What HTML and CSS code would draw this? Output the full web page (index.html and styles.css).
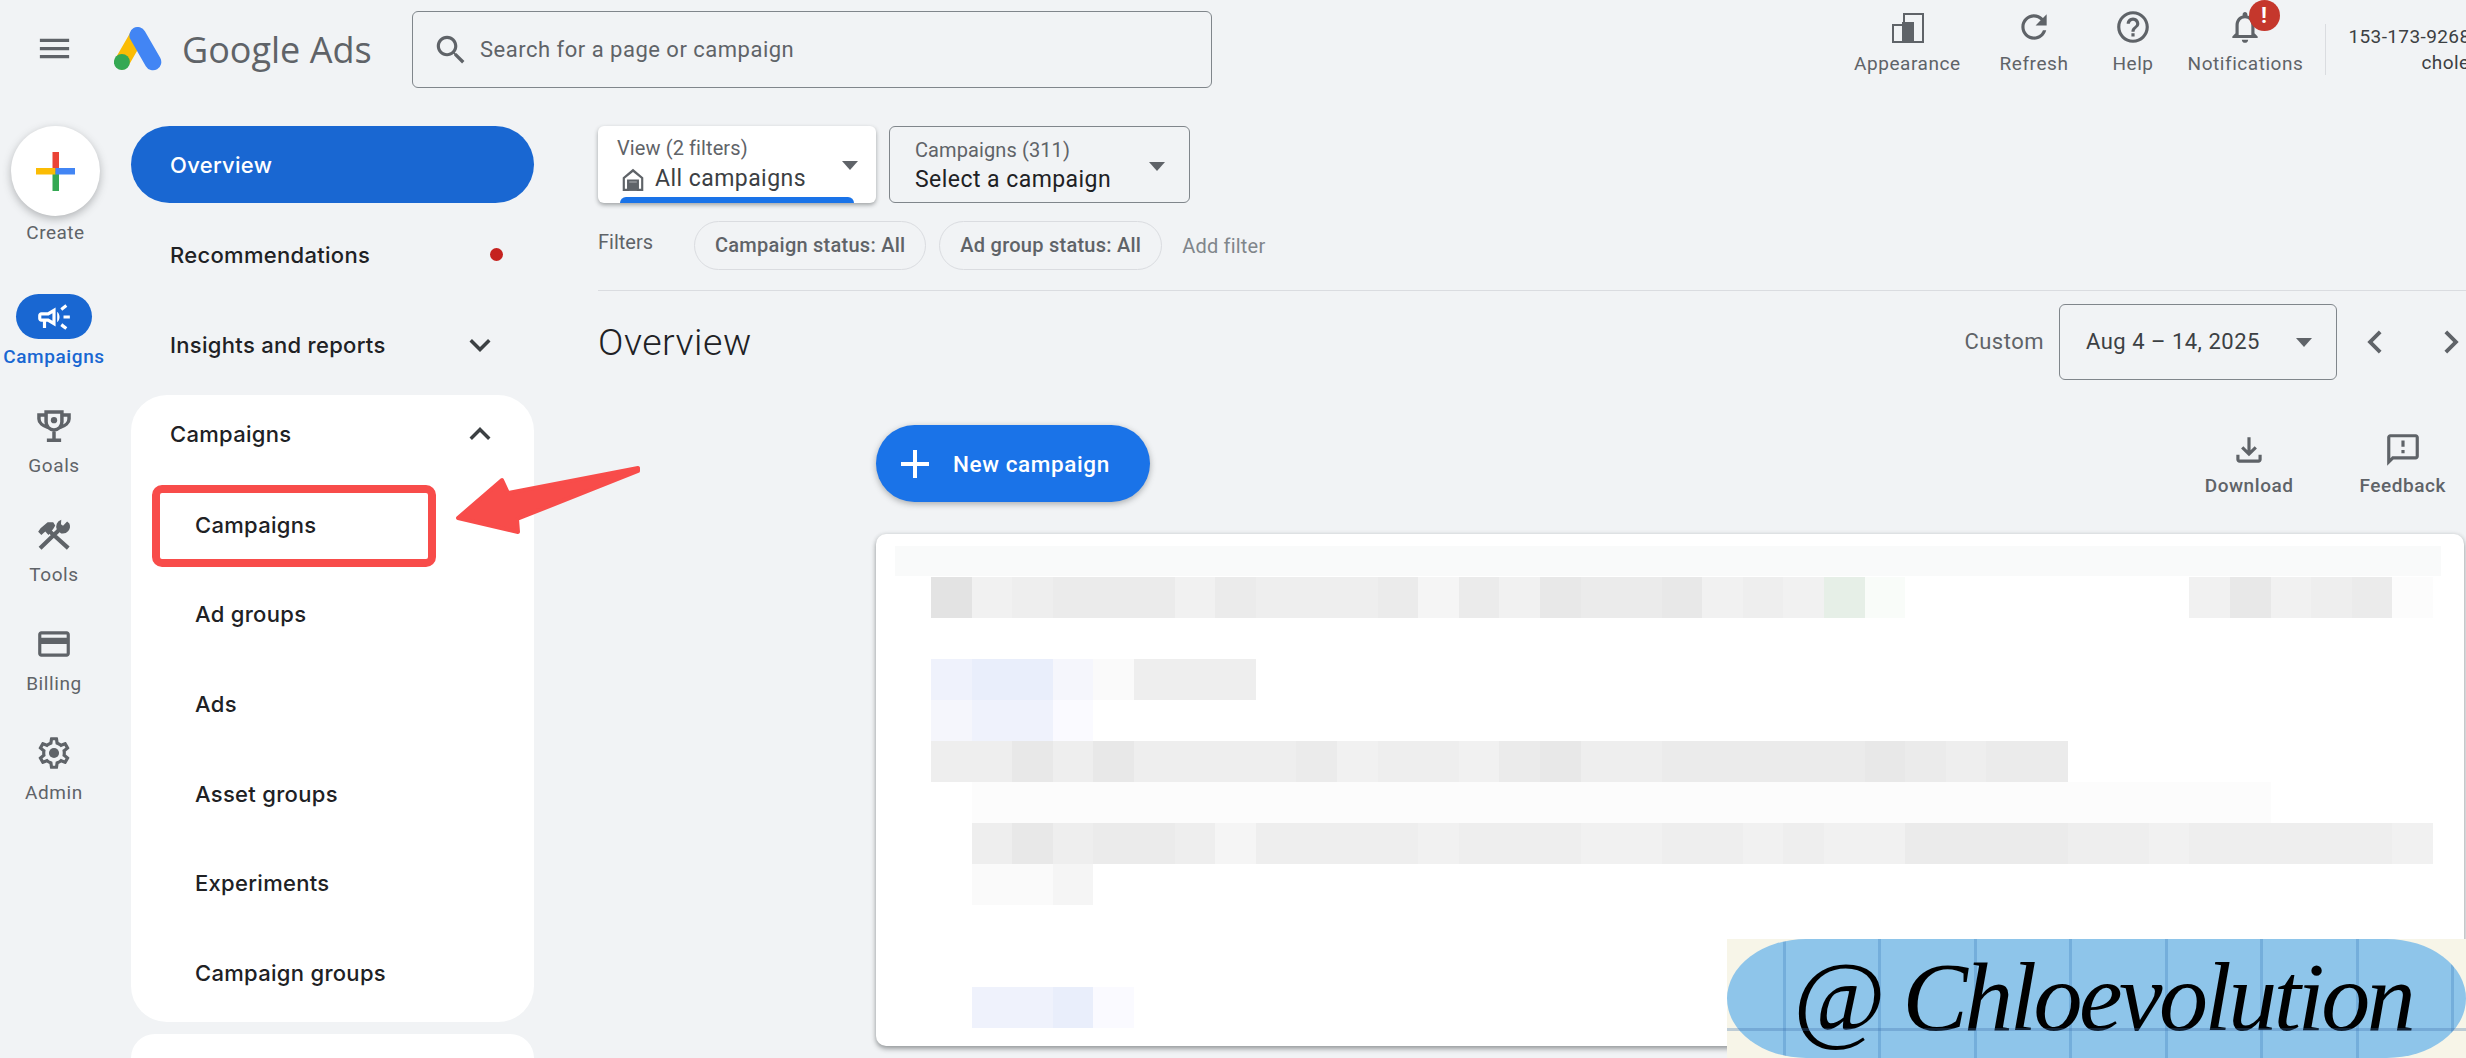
FILE: index.html
```html
<!DOCTYPE html>
<html lang="en">
<head>
  <meta charset="UTF-8">
  <title>Google Ads - Overview</title>
  <link rel="stylesheet" href="styles.css">
</head>
<body>

  <header class="topbar">
    <svg class="menu-icon" viewBox="0 0 24 24"><path d="M3 18h18v-2H3v2zm0-5h18v-2H3v2zm0-7v2h18V6H3z"/></svg>
    <svg class="logo" viewBox="0 0 48 44">
      <path d="M23 9 8 35" stroke="#fbbc04" stroke-width="15" stroke-linecap="round" fill="none"/>
      <path d="M23.7 8.3 39 35" stroke="#4285f4" stroke-width="16.6" stroke-linecap="round" fill="none"/>
      <circle cx="7.9" cy="35" r="8" fill="#34a853"/>
    </svg>
    <div class="brand">Google Ads</div>
    <div class="search">
      <svg class="icon" viewBox="0 0 24 24"><path d="M15.5 14h-.79l-.28-.27C15.41 12.59 16 11.11 16 9.5 16 5.91 13.09 3 9.5 3S3 5.91 3 9.5 5.91 16 9.5 16c1.61 0 3.09-.59 4.23-1.57l.27.28v.79l5 4.99L20.49 19l-4.99-5zm-6 0C7.01 14 5 11.99 5 9.5S7.01 5 9.5 5 14 7.01 14 9.5 11.99 14 9.5 14z"/></svg>
      <span>Search for a page or campaign</span>
    </div>
    <div class="tools">
      <div class="tool tool-appearance">
        <svg class="icon" viewBox="0 0 38 38"><path d="M15 5h21v30H4V16h11zM17 7v7h0v0h0v19h17V7zM6 18v15h8V18z" fill-rule="evenodd"/><rect x="14" y="14" width="12" height="20"/></svg>
        <span>Appearance</span>
      </div>
      <div class="tool tool-refresh">
        <svg class="icon" viewBox="0 0 24 24"><path d="M17.65 6.35C16.2 4.9 14.21 4 12 4c-4.42 0-7.99 3.58-7.99 8s3.57 8 7.99 8c3.73 0 6.84-2.55 7.73-6h-2.08c-.82 2.33-3.04 4-5.65 4-3.31 0-6-2.69-6-6s2.69-6 6-6c1.66 0 3.14.69 4.22 1.78L13 11h7V4l-2.35 2.35z"/></svg>
        <span>Refresh</span>
      </div>
      <div class="tool tool-help">
        <svg class="icon" viewBox="0 0 24 24"><path d="M11 18h2v-2h-2v2zm1-16C6.48 2 2 6.48 2 12s4.48 10 10 10 10-4.48 10-10S17.52 2 12 2zm0 18c-4.41 0-8-3.59-8-8s3.59-8 8-8 8 3.59 8 8-3.59 8-8 8zm0-14c-2.21 0-4 1.79-4 4h2c0-1.1.9-2 2-2s2 .9 2 2c0 2-3 1.75-3 5h2c0-2.25 3-2.5 3-5 0-2.21-1.79-4-4-4z"/></svg>
        <span>Help</span>
      </div>
      <div class="tool tool-notify">
        <svg class="icon" viewBox="0 0 24 24"><path d="M12 22c1.1 0 2-.9 2-2h-4c0 1.1.9 2 2 2zm6-6v-5c0-3.07-1.63-5.64-4.5-6.32V4c0-.83-.67-1.5-1.5-1.5s-1.5.67-1.5 1.5v.68C7.64 5.36 6 7.92 6 11v5l-2 2v1h16v-1l-2-2zm-2 1H8v-6c0-2.48 1.51-4.5 4-4.5s4 2.02 4 4.5v6z"/></svg>
        <span>Notifications</span>
        <b class="badge">!</b>
      </div>
    </div>
    <div class="account">
      <div>153-173-9268</div>
      <div>chole</div>
    </div>
  </header>

  <div class="layout">

    <aside class="rail">
      <div class="create">
        <div class="create-btn">
          <svg viewBox="0 0 39 39">
            <rect x="16.5" y="0" width="6.5" height="20" fill="#ea4335"/>
            <rect x="16.5" y="19" width="6.5" height="20" fill="#34a853"/>
            <rect x="0" y="16" width="19.5" height="6.5" fill="#fbbc04"/>
            <rect x="19.5" y="16" width="19.5" height="6.5" fill="#4285f4"/>
          </svg>
        </div>
        <span>Create</span>
      </div>
      <div class="rail-item rail-active">
        <div class="rail-icon">
          <svg class="icon" viewBox="0 0 24 24"><path fill-rule="evenodd" d="M18 11v2h4v-2zM16 17.61c.96.71 2.21 1.65 3.2 2.39l1.2-1.6c-.99-.74-2.24-1.68-3.2-2.4zM20.4 5.6 19.2 4c-.99.74-2.24 1.68-3.2 2.4L17.2 8c.96-.72 2.21-1.65 3.2-2.4zM4 9c-1.1 0-2 .9-2 2v2c0 1.1.9 2 2 2h1v4h2v-4h1l5 3V6L8 9zM4 11h4.6L11 9.6v4.8L8.6 13H4zM15.5 12c0-1.33-.58-2.53-1.5-3.35v6.69c.92-.81 1.5-2.01 1.5-3.34z"/></svg>
        </div>
        <span>Campaigns</span>
      </div>
      <div class="rail-item">
        <div class="rail-icon">
          <svg class="icon" viewBox="0 0 24 24"><path d="M7 3.2h10v6.3a5 5 0 0 1-10 0zM7 5H2.5v2.5C2.5 10 5 12 8 12.8M17 5h4.500v2.500C21.500 10 19 12 16 12.800M12 14.500v6M7.500 21h9" fill="none" stroke="#5f6368" stroke-width="2.200"/><circle cx="12" cy="8.300" r="2"/></svg>
        </div>
        <span>Goals</span>
      </div>
      <div class="rail-item">
        <div class="rail-icon">
          <svg class="icon" viewBox="0 0 24 24"><path d="M2 10l1.500-2.300L8 4h3.500l1.300 2-1 1.700L10.300 9.800 8.500 12 6.500 9.800 4 12z"/><path d="M9 9.500 21 20.300M3.200 20.300 15.500 8.500" fill="none" stroke="#5f6368" stroke-width="2.600"/><path d="M20.600 3.700 18 6.300l-1.300-.9.2-2.900a4.600 4.600 0 0 0-2.700 6.500l2.600 2.200a4.600 4.600 0 0 0 5.200-6.300z" transform="translate(-.3 -.2)"/></svg>
        </div>
        <span>Tools</span>
      </div>
      <div class="rail-item">
        <div class="rail-icon">
          <svg class="icon" viewBox="0 0 24 24"><path d="M20 4H4c-1.110 0-1.990.89-1.990 2L2 18c0 1.110.89 2 2 2h16c1.110 0 2-.89 2-2V6c0-1.110-.89-2-2-2zm0 14H4v-6h16v6zm0-10H4V6h16v2z"/></svg>
        </div>
        <span>Billing</span>
      </div>
      <div class="rail-item">
        <div class="rail-icon">
          <svg class="icon" viewBox="0 0 24 24"><path d="M19.430 12.980c.04-.32.07-.64.07-.98 0-.34-.03-.66-.07-.98l2.110-1.650c.19-.15.24-.42.12-.64l-2-3.460c-.09-.16-.26-.25-.44-.25-.06 0-.12.01-.17.03l-2.490 1c-.52-.4-1.080-.73-1.690-.98l-.38-2.650C14.460 2.180 14.250 2 14 2h-4c-.25 0-.46.18-.49.42l-.38 2.650c-.61.25-1.170.59-1.690.98l-2.490-1c-.06-.02-.12-.03-.18-.03-.17 0-.34.09-.43.25l-2 3.460c-.13.22-.07.49.12.64l2.110 1.650c-.04.32-.07.65-.07.98 0 .33.03.66.07.98l-2.110 1.650c-.19.15-.24.42-.12.64l2 3.460c.09.16.26.25.44.25.06 0 .12-.01.17-.03l2.490-1c.52.4 1.080.73 1.690.98l.38 2.650c.03.24.24.42.49.42h4c.25 0 .46-.18.49-.42l.38-2.650c.61-.25 1.170-.59 1.690-.98l2.490 1c.06.02.12.03.18.03.17 0 .34-.09.43-.25l2-3.460c.12-.22.07-.49-.12-.64l-2.110-1.650zm-1.980-1.710c.04.31.05.52.05.73 0 .21-.02.43-.05.73l-.14 1.130.89.7 1.080.84-.7 1.210-1.270-.51-1.040-.42-.9.68c-.43.32-.84.56-1.250.73l-1.060.43-.16 1.130-.2 1.350h-1.400l-.19-1.350-.16-1.130-1.060-.43c-.43-.18-.83-.41-1.230-.71l-.91-.7-1.060.43-1.270.51-.7-1.210 1.080-.84.89-.7-.14-1.130c-.03-.31-.05-.54-.05-.74s.02-.43.05-.73l.14-1.130-.89-.7-1.080-.84.7-1.210 1.270.51 1.040.42.9-.68c.43-.32.84-.56 1.250-.73l1.060-.43.16-1.130.2-1.350h1.390l.19 1.350.16 1.130 1.060.43c.43.18.83.41 1.230.71l.91.7 1.060-.43 1.270-.51.7 1.210-1.070.85-.89.7.14 1.130z"/><circle cx="12" cy="12" r="3.200"/></svg>
        </div>
        <span>Admin</span>
      </div>
    </aside>

    <nav class="nav">
      <div class="nav-row nav-active">Overview</div>
      <div class="nav-row">Recommendations<i class="dot"></i></div>
      <div class="nav-row">Insights and reports
        <svg class="chevron" viewBox="0 0 24 24"><path d="M16.590 8.590 12 13.170 7.410 8.590 6 10l6 6 6-6z"/></svg>
      </div>
      <div class="nav-card">
        <div class="nav-head">Campaigns
          <svg class="chevron" viewBox="0 0 24 24"><path d="M7.410 15.410 12 10.830l4.590 4.580L18 14l-6-6-6 6z"/></svg>
        </div>
        <div class="nav-sub">Campaigns</div>
        <div class="nav-sub">Ad groups</div>
        <div class="nav-sub">Ads</div>
        <div class="nav-sub">Asset groups</div>
        <div class="nav-sub">Experiments</div>
        <div class="nav-sub">Campaign groups</div>
      </div>
      <div class="nav-card nav-card-next"></div>
    </nav>

    <main class="main">
      <div class="pickers">
        <div class="picker picker-view">
          <div class="picker-label">View (2 filters)</div>
          <div class="picker-value">
            <svg class="home" viewBox="0 0 24 24"><path d="M12 2.500 2.500 10.500V23H8.500V14.500H15.500V23H21.500V10.500ZM12 5.500 19.500 11.500V21H17.500V12.500H6.500V21H4.500V11.500Z" fill-rule="evenodd"/><rect x="8" y="15" width="8" height="8"/></svg>
            All campaigns
          </div>
          <i class="caret"></i>
          <i class="picker-bar"></i>
        </div>
        <div class="picker picker-campaign">
          <div class="picker-label">Campaigns (311)</div>
          <div class="picker-value">Select a campaign</div>
          <i class="caret"></i>
        </div>
      </div>

      <div class="filters">
        <span class="filters-label">Filters</span>
        <span class="chip">Campaign status: All</span>
        <span class="chip">Ad group status: All</span>
        <span class="add-filter">Add filter</span>
      </div>

      <div class="title-row">
        <h1>Overview</h1>
        <span class="custom">Custom</span>
        <div class="date-box">Aug 4 – 14, 2025<i class="caret"></i></div>
        <svg class="pager" viewBox="0 0 24 24"><path d="M15.410 7.410 14 6l-6 6 6 6 1.410-1.410L10.830 12z"/></svg>
        <svg class="pager pager-next" viewBox="0 0 24 24"><path d="M10 6 8.590 7.410 13.170 12l-4.580 4.590L10 18l6-6z"/></svg>
      </div>

      <div class="content">
        <div class="actions">
          <div class="new-btn">
            <svg viewBox="0 0 24 24"><path d="M19 13h-6v6h-2v-6H5v-2h6V5h2v6h6v2z"/></svg>
            New campaign
          </div>
          <div class="action action-download">
            <svg class="icon" viewBox="0 0 24 24"><path d="M18 15v3H6v-3H4v3c0 1.100.9 2 2 2h12c1.100 0 2-.9 2-2v-3h-2zm-1-4-1.410-1.410L13 12.170V4h-2v8.170L8.410 9.590 7 11l5 5 5-5z"/></svg>
            <span>Download</span>
          </div>
          <div class="action">
            <svg class="icon" viewBox="0 0 24 24"><path d="M20 2H4c-1.100 0-1.990.9-1.990 2L2 22l4-4h14c1.100 0 2-.9 2-2V4c0-1.100-.9-2-2-2zm0 14H5.170L4 17.170V4h16v12zm-9-4h2v2h-2zm0-6h2v4h-2z"/></svg>
            <span>Feedback</span>
          </div>
        </div>

        <div class="table-card">
          <div class="table-strip"></div>
          <div class="mosaic" id="mosaic"></div>
        </div>
      </div>
    </main>
  </div>

  <!-- annotations on top of the screenshot -->
  <div class="mark-box"></div>
  <svg class="mark-arrow" viewBox="0 0 200 80">
    <path d="M3 57 47 19 53 32 183 7 183 10 62 58 63 71Z" fill="#f84c4a" stroke="#f84c4a" stroke-width="4" stroke-linejoin="round"/>
  </svg>

  <div class="stamp">
    <div class="stamp-pill"><span class="stamp-at">@</span> Chloevolution</div>
    <i class="stamp-line"></i>
  </div>

  <script src="mosaic.js"></script>
</body>
</html>
```

FILE: styles.css
```css
* {
  box-sizing: border-box;
}
html, body {
  margin: 0;
  width: 2466px;
  height: 1058px;
  overflow: hidden;
}
body {
  position: relative;
  font-family: Roboto, Arial, sans-serif;
  font-size: 22px;
  color: #202124;
  background: #f1f3f5;
}
.icon {
  width: 38px;
  height: 38px;
  fill: #5f6368;
  display: block;
}

/* top bar */
.topbar {
  height: 126px;
  display: flex;
  align-items: flex-start;
  padding-left: 35px;
  overflow: hidden;
}
.topbar > * {
  flex: none;
}
.menu-icon {
  width: 39px;
  height: 39px;
  margin-top: 29px;
  fill: #5f6368;
}
.logo {
  width: 48px;
  height: 44px;
  margin: 27px 0 0 40px;
}
.brand {
  margin: 23px 0 0 20px;
  font-family: "Open Sans", Arial, sans-serif;
  font-size: 36px;
  line-height: 54px;
  color: #5f6368;
  width: 230px;
}
.search {
  width: 800px;
  height: 77px;
  margin-top: 11px;
  border: 1px solid #80868b;
  border-radius: 6px;
  display: flex;
  align-items: center;
  gap: 10px;
  padding-left: 19px;
  color: #5f6368;
  letter-spacing: .5px;
}
.tools {
  display: flex;
  margin-left: 642px;
  padding-top: 8px;
}
.tool {
  position: relative;
  display: flex;
  flex-direction: column;
  align-items: center;
  font-size: 19px;
  letter-spacing: .55px;
  color: #5f6368;
}
.tool span {
  line-height: 24px;
  margin-top: 6px;
}
.tool-appearance { margin-right: 39px; }
.tool-refresh { margin-right: 44px; }
.tool-help { margin-right: 34px; }
.badge {
  position: absolute;
  left: 61px;
  top: -8px;
  width: 31px;
  height: 31px;
  border-radius: 50%;
  background: #c5372c;
  color: #fff;
  font-size: 22px;
  line-height: 31px;
  text-align: center;
  letter-spacing: 0;
}
.account {
  width: 144px;
  height: 51px;
  margin: 24px 0 0 22px;
  padding-left: 22px;
  border-left: 1px solid #dadce0;
  text-align: right;
  font-size: 19px;
  letter-spacing: .4px;
  line-height: 26px;
  color: #3c4043;
  white-space: nowrap;
}

/* page columns */
.layout {
  display: flex;
  height: 932px;
}

/* left rail */
.rail {
  flex: none;
  width: 131px;
}
.create {
  width: 111px;
  display: flex;
  flex-direction: column;
  align-items: center;
  font-size: 19px;
  letter-spacing: .5px;
  color: #5f6368;
  margin-bottom: 49px;
}
.create span {
  line-height: 24px;
  margin-top: 5px;
}
.create-btn {
  width: 89px;
  height: 90px;
  border-radius: 50%;
  background: #fff;
  box-shadow: 0 3px 8px rgba(60, 64, 67, .35);
  display: flex;
  align-items: center;
  justify-content: center;
}
.create-btn svg {
  width: 39px;
  height: 39px;
}
.rail-item {
  width: 108px;
  height: 75px;
  margin-bottom: 34px;
  display: flex;
  flex-direction: column;
  align-items: center;
  font-size: 19px;
  letter-spacing: .6px;
  color: #5f6368;
}
.rail-item span {
  line-height: 24px;
  margin-top: 6px;
  white-space: nowrap;
}
.rail-icon {
  width: 76px;
  height: 45px;
  border-radius: 23px;
  display: flex;
  align-items: center;
  justify-content: center;
}
.rail-active {
  color: #1967d2;
  font-weight: 500;
}
.rail-active .rail-icon {
  background: #1967d2;
}
.rail-active .icon {
  fill: #fff;
}

/* nav column */
.nav {
  flex: none;
  width: 403px;
  font-family: Inter, Roboto, sans-serif;
  font-size: 22px;
  font-weight: 500;
  letter-spacing: .3px;
}
.nav-row {
  height: 77px;
  margin-bottom: 13px;
  padding: 0 39px;
  display: flex;
  align-items: center;
  justify-content: space-between;
}
.nav-active {
  background: #1967d2;
  color: #fff;
  border-radius: 39px;
}
.dot {
  width: 13px;
  height: 13px;
  border-radius: 50%;
  background: #c5221f;
  margin-right: -8px;
}
.chevron {
  width: 42px;
  height: 42px;
  fill: #3c4043;
  margin-right: -6px;
}
.nav-card {
  background: #fff;
  border-radius: 36px;
  padding-bottom: 4px;
  margin-top: -1px;
}
.nav-card-next {
  height: 24px;
  margin-top: 12px;
  padding-bottom: 0;
  border-radius: 36px 36px 0 0;
}
.nav-head {
  height: 77px;
  margin-bottom: 8px;
  padding: 0 39px;
  display: flex;
  align-items: center;
  justify-content: space-between;
}
.nav-sub {
  height: 89.600px;
  padding-left: 64px;
  display: flex;
  align-items: center;
}

/* main column */
.main {
  flex: none;
  width: 1868px;
  margin-left: 64px;
}
.pickers {
  display: flex;
  gap: 13px;
}
.picker {
  position: relative;
  height: 77px;
  border-radius: 6px;
  overflow: hidden;
}
.picker-view {
  width: 278px;
  padding: 10px 0 0 19px;
  background: #fff;
  box-shadow: 0 2px 4px rgba(60, 64, 67, .45);
  overflow: visible;
}
.picker-campaign {
  width: 301px;
  padding: 11px 0 0 25px;
  border: 1px solid #80868b;
}
.picker-label {
  font-size: 20px;
  line-height: 24px;
  color: #5f6368;
  letter-spacing: .1px;
}
.picker-value {
  display: flex;
  align-items: center;
  gap: 9px;
  line-height: 30px;
  margin-top: 3px;
  font-size: 23px;
  letter-spacing: .45px;
}
.picker-view .picker-value {
  color: #3c4043;
  margin-top: 4px;
}
.home {
  width: 26px;
  height: 26px;
  fill: #5f6368;
  margin-left: 3px;
}
.caret {
  position: absolute;
  top: 35px;
  right: 18px;
  border-left: 8.500px solid transparent;
  border-right: 8.500px solid transparent;
  border-top: 9px solid #5f6368;
}
.picker-campaign .caret {
  right: 24px;
  top: 35px;
}
.picker-bar {
  position: absolute;
  left: 22px;
  right: 22px;
  bottom: 0;
  height: 6px;
  background: #1a73e8;
  border-radius: 6px 6px 0 0;
}
.filters {
  display: flex;
  align-items: center;
  height: 49px;
  margin-top: 18px;
  font-size: 20px;
  color: #5f6368;
}
.filters-label {
  width: 96px;
  margin-top: -8px;
}
.chip {
  height: 49px;
  line-height: 47px;
  padding: 0 20px;
  margin-right: 13px;
  border: 1px solid #dadce0;
  border-radius: 25px;
  font-weight: 500;
  letter-spacing: .25px;
  white-space: nowrap;
}
.add-filter {
  margin-left: 7px;
  color: #80868b;
  letter-spacing: .2px;
}
.title-row {
  display: flex;
  align-items: center;
  height: 89px;
  margin-top: 20px;
  padding-top: 13px;
  border-top: 1px solid #dadce0;
}
.title-row h1 {
  margin: 0;
  font-size: 37.500px;
  font-weight: 300;
  letter-spacing: .5px;
  flex: 1;
}
.custom {
  color: #5f6368;
  letter-spacing: .5px;
}
.date-box {
  position: relative;
  width: 278px;
  height: 76px;
  margin-left: 15px;
  padding-left: 26px;
  display: flex;
  align-items: center;
  border: 1px solid #80868b;
  border-radius: 6px;
  color: #3c4043;
  letter-spacing: .5px;
}
.date-box .caret {
  right: 24px;
  top: 33px;
}
.pager {
  width: 46px;
  height: 46px;
  margin-left: 15px;
  fill: #5f6368;
}
.pager-next {
  margin: 0 -8px 0 30px;
}
.content {
  margin-left: 278px;
}
.actions {
  display: flex;
  align-items: flex-start;
  height: 155px;
  padding: 46px 20px 0 0;
}
.new-btn {
  width: 274px;
  height: 77px;
  border-radius: 39px;
  background: #1a73e8;
  box-shadow: 0 2px 6px rgba(60, 64, 67, .4);
  display: flex;
  align-items: center;
  gap: 14px;
  padding-left: 15px;
  color: #fff;
  font-weight: 500;
  font-size: 22.500px;
  letter-spacing: .6px;
}
.new-btn svg {
  width: 48px;
  height: 48px;
  fill: #fff;
}
.action {
  display: flex;
  flex-direction: column;
  align-items: center;
  font-size: 19px;
  font-weight: 500;
  letter-spacing: .55px;
  color: #5f6368;
  margin-left: 66px;
  margin-top: 6px;
}
.action span {
  line-height: 24px;
  margin-top: 5px;
}
.action-download {
  margin-left: auto;
}
.table-card {
  width: 1588px;
  height: 512px;
  padding-top: 12px;
  background: #fff;
  border-radius: 10px;
  box-shadow: 0 3px 5px rgba(60, 64, 67, .45), 0 0 4px rgba(60, 64, 67, .15);
}
.table-strip {
  height: 30px;
  margin: 0 23px 0 19px;
  background: #f9fafa;
}
.mosaic {
  margin: 1px 0 0 55px;
  filter: blur(.7px);
}
.mosaic-row {
  display: flex;
  height: 41px;
}
.mosaic-row i {
  flex: none;
  width: 40.600px;
}
.s-a { background: #e3e3e3; }
.s-b { background: #e8e8e8; }
.s-c { background: #ebebeb; }
.s-d { background: #eeeeee; }
.s-e { background: #f1f1f1; }
.s-f { background: #f5f5f5; }
.s-g { background: #fafafa; }
.s-h { background: #fcfcfc; }
.s-p { background: #e9eefb; }
.s-q { background: #eff2fc; }
.s-r { background: #f5f6fc; }
.s-s { background: #fafaff; }
.s-t { background: #e6efe7; }
.s-u { background: #f9fcf9; }

/* annotations */
.mark-box {
  position: absolute;
  left: 152px;
  top: 485px;
  width: 284px;
  height: 82px;
  border: 8px solid #f84c4a;
  border-radius: 10px;
}
.mark-arrow {
  position: absolute;
  left: 455px;
  top: 461px;
  width: 200px;
  height: 80px;
}
.stamp {
  position: absolute;
  left: 1727px;
  top: 939px;
  width: 739px;
  height: 119px;
  background: #f7f5e8;
}
.stamp-pill {
  height: 119px;
  padding-left: 66px;
  border-radius: 80px / 60px;
  background:
    repeating-linear-gradient(90deg, transparent 0 56px, #74aedb 56px 59px, transparent 59px 95.500px),
    #8ec5ea;
  font-family: "Liberation Serif", serif;
  font-style: italic;
  font-size: 98px;
  line-height: 116px;
  letter-spacing: -3.500px;
  color: #000;
  white-space: nowrap;
}
.stamp-at {
  font-size: 100px;
}
.stamp-line {
  position: absolute;
  left: 0;
  right: 0;
  top: 89px;
  height: 3px;
  background: rgba(60, 110, 170, .3);
}
```

FILE: mosaic.js
```js
// blurred part of the table, one string per row, one letter per cell (see .s-* in styles.css)
var rows = [
  "aedcccecdddcfcebccbedetu.......ebedch",
  "",
  "qpprgddd",
  "rqqs",
  "ddbdbddddcedde" + "cbddcccccbcdcc",
  ".hhhhhhhhhhhhhhhhhhhhhhhhhhhhhhhh",
  ".dbdccdfddddedddeeddedeeccccddeddddde",
  ".ggf",
  "",
  "",
  ".qqps"
];

var box = document.getElementById("mosaic");
rows.forEach(function (row) {
  var el = document.createElement("div");
  el.className = "mosaic-row";
  row.split("").forEach(function (c) {
    var cell = document.createElement("i");
    if (c !== ".") cell.className = "s-" + c;
    el.appendChild(cell);
  });
  box.appendChild(el);
});
```
